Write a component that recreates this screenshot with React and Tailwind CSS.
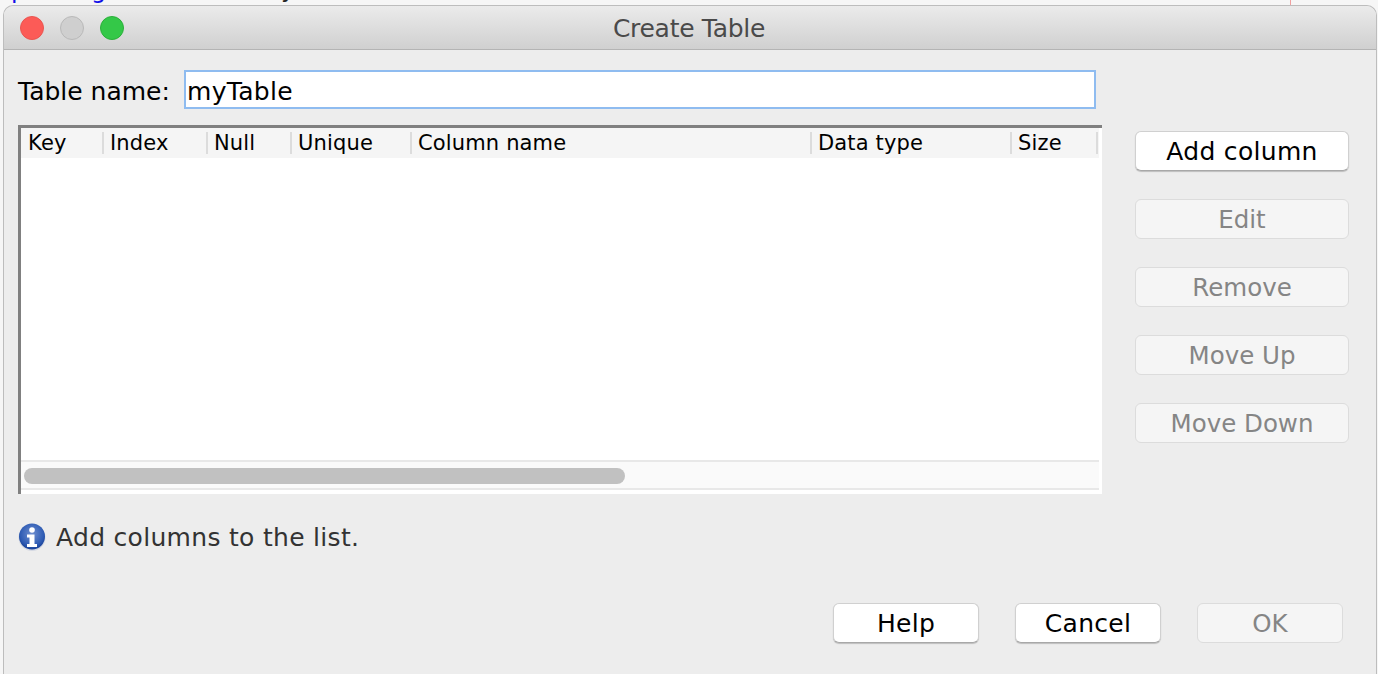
import React from "react";

const columns = [
  { name: "Key", width: "w-[83px] pl-[7px]" },
  { name: "Index", width: "w-[104px] pl-[6px]" },
  { name: "Null", width: "w-[84px] pl-[6px]" },
  { name: "Unique", width: "w-[120px] pl-[6px]" },
  { name: "Column name", width: "w-[400px] pl-[6px]" },
  { name: "Data type", width: "w-[200px] pl-[6px]" },
  { name: "Size", width: "w-[86px] pl-[6px]" },
];

const sideButtons = [
  { label: "Add column", enabled: true },
  { label: "Edit" },
  { label: "Remove" },
  { label: "Move Up" },
  { label: "Move Down" },
];

function DialogButton({ label, enabled, className }) {
  return (
    <button
      className={`h-10 rounded-md leading-none ${
        enabled
          ? "bg-white text-[25px] tracking-[0.3px] text-black border border-[#d0d0d0] border-b-[#a8a8a8] shadow-[0_1px_1px_rgba(0,0,0,0.2)]"
          : "bg-[#f5f5f5] pt-[2px] text-[24.5px] text-[#858585] border border-[#dcdcdc]"
      } ${className}`}
    >
      {label}
    </button>
  );
}

function InfoIcon() {
  return (
    <svg width="28" height="28" viewBox="0 0 28 28">
      <defs>
        <radialGradient id="infoFill" cx="50%" cy="40%" r="60%">
          <stop offset="0%" stopColor="#6f8fd0" />
          <stop offset="75%" stopColor="#2f5cb4" />
          <stop offset="100%" stopColor="#163f96" />
        </radialGradient>
      </defs>
      <circle cx="14" cy="14.5" r="13.5" fill="#d4d8e2" />
      <circle cx="14" cy="13.5" r="13" fill="url(#infoFill)" />
      <circle cx="14" cy="7" r="2.8" fill="#fff" />
      <path d="M9 11.5h7.5v9.5h2.5v3h-10v-3h2.5v-6.5h-2.5z" fill="#fff" />
    </svg>
  );
}

export default function App() {
  return (
    <div className="h-[674px] w-[1378px] overflow-hidden bg-[#f6f6f6] font-['DejaVu_Sans',sans-serif]">
      {/* page behind the dialog, only descenders show */}
      <div className="relative h-[5px] overflow-hidden text-[24px] leading-[24px]">
        <span className="absolute left-[11px] top-[-22px] text-[#1010e8]">p</span>
        <span className="absolute left-[91px] top-[-22px] text-[#1010e8]">g</span>
        <span className="absolute left-[281px] top-[-23px] text-[#222]">y</span>
        <div className="absolute left-[1290px] top-0 h-[5px] w-px bg-[#f0a0a0]" />
      </div>
      <div className="ml-[3px] flex h-[669px] w-[1374px] flex-col rounded-t-[10px] border border-b-0 border-[#bdbdbd] bg-[#ededed]">
        <div className="relative flex h-[44px] shrink-0 items-center justify-center rounded-t-[10px] border-b border-[#b4b4b4] bg-gradient-to-b from-[#ebebeb] to-[#d0d0d0] pr-[2px] pt-[2px]">
          <div className="absolute left-[16px] top-[10px] flex gap-[16px]">
            <span className="h-6 w-6 rounded-full border border-[#ea5550] bg-[#fc5b57]" />
            <span className="h-6 w-6 rounded-full border border-[#b9b9b9] bg-[#cfcfcf]" />
            <span className="h-6 w-6 rounded-full border border-[#2bb03a] bg-[#34c848]" />
          </div>
          <span className="text-[25px] tracking-[-0.3px] text-[#4a4a4a]">Create Table</span>
        </div>

        <div className="flex flex-1 flex-col pl-[14px] pr-[27px]">
          <div className="mt-[20px] flex h-[39px] items-center">
            <span className="w-[166px] pt-[5px] text-[25px] text-black">Table name:</span>
            <div className="flex h-[39px] w-[912px] items-center border-2 border-[#8fbcf0] bg-white pl-[1px] pt-[4px] text-[25px] tracking-[0.3px] text-black">
              myTable
            </div>
          </div>

          <div className="mt-[16px] flex justify-between">
            <div className="h-[369px] w-[1084px] border-l-[3px] border-t-[3px] border-[#808080] bg-white">
              <div className="flex h-[30px] w-[1078px] bg-[#f5f5f5] pt-[4px]">
                {columns.map((c) => (
                  <div
                    key={c.name}
                    className={`${c.width} h-[22px] border-r-2 border-[#dcdcdc] text-[21px] leading-[22px] tracking-[0.15px] text-black`}
                  >
                    {c.name}
                  </div>
                ))}
              </div>
              <div className="h-[302px]" />
              <div className="flex h-[30px] w-[1078px] items-center border-y-2 border-[#e8e8e8] bg-[#fafafa] pl-[3px] pt-[1px]">
                <div className="h-4 w-[601px] rounded-full bg-[#c1c1c1]" />
              </div>
            </div>

            <div className="mt-[6px] flex w-[214px] flex-col gap-[28px]">
              {sideButtons.map((b) => (
                <DialogButton key={b.label} label={b.label} enabled={b.enabled} className="w-full" />
              ))}
            </div>
          </div>

          <div className="mt-[29px] flex h-[28px] items-center gap-[10px]">
            <InfoIcon />
            <span className="pt-[2px] text-[25px] tracking-[0.3px] text-[#333]">Add columns to the list.</span>
          </div>

          <div className="ml-[815px] mt-[52px] flex gap-[36px]">
            <DialogButton label="Help" enabled className="w-[146px]" />
            <DialogButton label="Cancel" enabled className="w-[146px]" />
            <DialogButton label="OK" className="w-[146px]" />
          </div>
        </div>
      </div>
    </div>
  );
}
